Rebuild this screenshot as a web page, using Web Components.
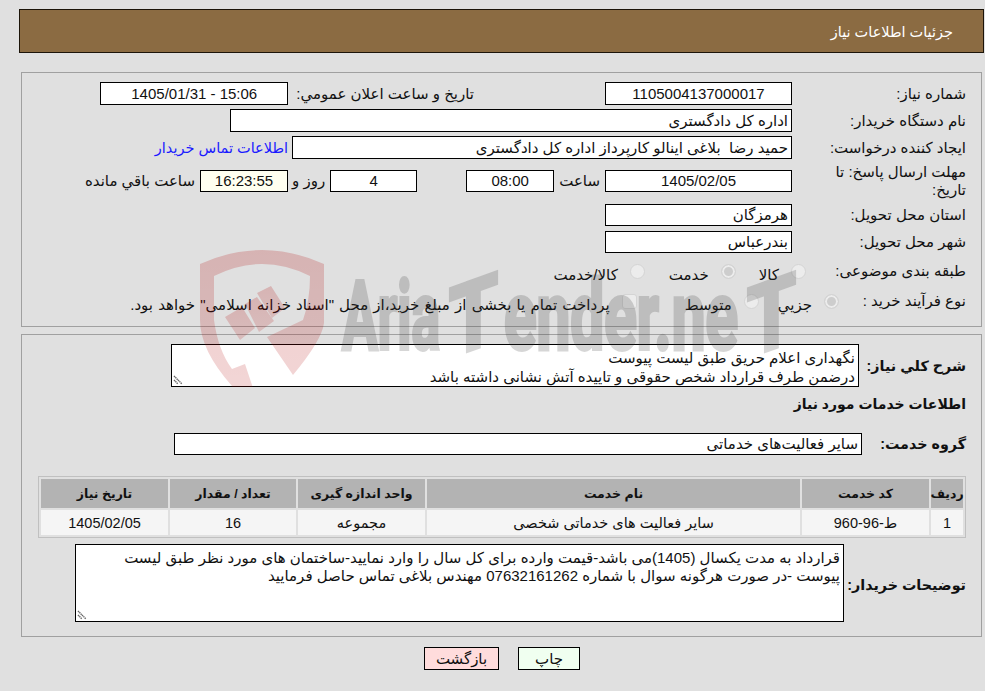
<!DOCTYPE html>
<html lang="fa">
<head>
<meta charset="utf-8">
<title>جزئیات اطلاعات نیاز</title>
<style>
  html, body { margin: 0; background: #e0e0e0; }
  body {
    position: relative;
    height: 691px;
    overflow: hidden;
    color: #111;
    font: 15px/18px "Liberation Sans", "DejaVu Sans", sans-serif;
  }
</style>
</head>
<body>
<page-view></page-view>
<script>
class TitleBar extends HTMLElement {
  constructor() {
    super();
    this.attachShadow({ mode: "open" });
    this.shadowRoot.innerHTML = `
      <style>
        :host {
          display: flex;
          align-items: center;
          box-sizing: border-box;
          height: 44px;
          margin: 9px 1px 0 19px;
          padding: 1px 30px 0;
          direction: rtl;
          color: #fff;
          font-size: 14.5px;
          background: #8b6b42;
          border: 1px solid #1c1409;
        }
      </style>
      <slot></slot>
    `;
  }
}
customElements.define("title-bar", TitleBar);

class InfoPanel extends HTMLElement {
  constructor() {
    super();
    this.attachShadow({ mode: "open" });
    this.shadowRoot.innerHTML = `
      <style>
        :host {
          display: block;
          box-sizing: border-box;
          margin: 0 3px 0 21px;
          padding: 9px 15px 0 16px;
          direction: rtl;
          border: 1px solid #a0a0a0;
        }
      </style>
      <slot></slot>
    `;
  }
}
customElements.define("info-panel", InfoPanel);

class FormRow extends HTMLElement {
  constructor() {
    super();
    this.attachShadow({ mode: "open" });
    this.shadowRoot.innerHTML = `
      <style>
        :host {
          display: flex;
          align-items: stretch;
          height: 22px;
        }
        #label {
          flex: none;
          display: flex;
          align-items: center;
          box-sizing: border-box;
          width: var(--label-w, 174px);
          padding-top: var(--label-top, 0);
          white-space: pre;
        }
        :host([strong]) #label { font-size: 14.3px; font-weight: bold; }
      </style>
      <div id="label"></div>
      <slot></slot>
    `;
    this.shadowRoot.querySelector("#label").textContent = this.getAttribute("label");
  }
}
customElements.define("form-row", FormRow);

class ValueBox extends HTMLElement {
  constructor() {
    super();
    this.attachShadow({ mode: "open" });
    this.shadowRoot.innerHTML = `
      <style>
        :host {
          display: flex;
          flex: none;
          align-items: center;
          box-sizing: border-box;
          padding: 0 3px;
          background: #fff;
          border: 1px solid #000;
        }
        :host([center]) { justify-content: center; }
        slot { white-space: pre; }
      </style>
      <slot></slot>
    `;
  }
}
customElements.define("value-box", ValueBox);

class PlainText extends HTMLElement {
  constructor() {
    super();
    this.attachShadow({ mode: "open" });
    this.shadowRoot.innerHTML = `
      <style>
        :host {
          display: flex;
          flex: none;
          align-items: center;
        }
        slot { white-space: pre; }
      </style>
      <slot></slot>
    `;
  }
}
customElements.define("plain-text", PlainText);

class ChoiceItem extends HTMLElement {
  constructor() {
    super();
    this.attachShadow({ mode: "open" });
    this.shadowRoot.innerHTML = `
      <style>
        :host {
          display: flex;
          flex: none;
          gap: 12px;
          align-items: center;
        }
        #mark {
          flex: none;
          box-sizing: border-box;
          width: 15px;
          height: 15px;
          background: #ececec;
          border: 1px solid #d4d4d4;
          border-radius: 50%;
        }
        :host([square]) #mark { border-radius: 3px; }
        :host([checked]) #mark {
          background: #cdcdcd;
          box-shadow: inset 0 0 0 2px #ececec;
        }
        #text { padding-top: 8px; white-space: pre; }
      </style>
      <div id="mark"></div>
      <div id="text"><slot></slot></div>
    `;
  }
}
customElements.define("choice-item", ChoiceItem);

class NoteBox extends HTMLElement {
  constructor() {
    super();
    this.attachShadow({ mode: "open" });
    this.shadowRoot.innerHTML = `
      <style>
        :host {
          display: block;
          position: relative;
          flex: none;
          box-sizing: border-box;
          padding: 4px 3px 0;
          background: #fff;
          border: 1px solid #000;
        }
        slot { white-space: pre; }
        svg {
          position: absolute;
          left: 1px;
          bottom: 1px;
          width: 10px;
          height: 10px;
        }
      </style>
      <slot></slot>
      <svg viewBox="0 0 10 10">
        <path d="M1 1 9 9M1 5 5 9" stroke="#666" stroke-width="1.4" stroke-dasharray="1.4 .5" fill="none"/>
      </svg>
    `;
  }
}
customElements.define("note-box", NoteBox);

class ServiceTable extends HTMLElement {
  constructor() {
    super();
    this.attachShadow({ mode: "open" });
    const heads = ["ردیف", "کد خدمت", "نام خدمت", "واحد اندازه گیری", "تعداد / مقدار", "تاریخ نیاز"];
    const cells = ["1", "ط-96-960", "سایر فعالیت های خدماتی شخصی", "مجموعه", "16", "1405/02/05"];
    this.shadowRoot.innerHTML = `
      <style>
        :host {
          display: grid;
          grid-template-columns: 32px 127px 373px 127px 126px 127px;
          grid-template-rows: 29px 25px;
          gap: 2px;
          box-sizing: border-box;
          padding: 2px;
          border: 1px solid #c0c0c0;
          font-size: 14.5px;
        }
        div {
          display: flex;
          align-items: center;
          justify-content: center;
          white-space: nowrap;
        }
        .head { font-size: 12.5px; font-weight: bold; background: #b3b3b3; }
        .cell { background: #f5f5f5; }
      </style>
      ${heads.map((text) => `<div class="head">${text}</div>`).join("")}
      ${cells.map((text) => `<div class="cell">${text}</div>`).join("")}
    `;
  }
}
customElements.define("service-table", ServiceTable);

class ActionButton extends HTMLElement {
  constructor() {
    super();
    this.attachShadow({ mode: "open" });
    this.shadowRoot.innerHTML = `
      <style>
        :host {
          display: flex;
          align-items: center;
          justify-content: center;
          box-sizing: border-box;
          height: 23px;
          border: 1px solid #000;
        }
      </style>
      <slot></slot>
    `;
  }
}
customElements.define("action-button", ActionButton);

// lies over the whole page, like the semi transparent logo of the original
class WaterMark extends HTMLElement {
  constructor() {
    super();
    this.attachShadow({ mode: "open" });
    this.shadowRoot.innerHTML = `
      <style>
        :host {
          position: absolute;
          left: 0;
          top: 0;
          width: 985px;
          height: 387px;
          pointer-events: none;
        }
        svg { display: block; }
        #word { opacity: .2; }
        text {
          font-family: Roboto, sans-serif;
          font-weight: 700;
          font-size: 96px;
          fill: rgb(54, 54, 54);
          stroke: rgb(54, 54, 54);
          stroke-width: 4px;
        }
      </style>
      <svg width="985" height="387" viewBox="0 0 985 387">
        <defs>
          <linearGradient id="fade" x1="0" y1="0" x2="0" y2="1">
            <stop offset="0" stop-color="rgb(176,0,0)" stop-opacity=".2"/>
            <stop offset="1" stop-color="rgb(176,0,0)" stop-opacity=".16"/>
          </linearGradient>
        </defs>
        <g fill="url(#fade)">
          <path fill-rule="evenodd" d="M200 264Q262 236 324 264V323Q322 340 293 375L267 337 303 320Q310 300 310 276Q262 252 214 276V320Q218 350 232 369L245 364 257 400H224L232 386Q200 350 200 320Z"/>
          <path d="M225 317 242 307 255 328 240 340Z"/>
          <path d="M245 304 257 297 274 321 259 332Z"/>
          <path d="M257 293 271 286 285 308 272 318Z"/>
        </g>
        <g id="word">
          <text x="342" y="349" textLength="98" lengthAdjust="spacingAndGlyphs">Aria</text>
          <text x="449" y="349" textLength="49" lengthAdjust="spacingAndGlyphs"
            transform="translate(473 0) skewY(-20) translate(-473 0)">T</text>
          <text x="504" y="349" textLength="234" lengthAdjust="spacingAndGlyphs">ender.ne</text>
          <text x="747" y="349" textLength="49" lengthAdjust="spacingAndGlyphs"
            transform="translate(771 0) skewY(-20) translate(-771 0)">T</text>
        </g>
      </svg>
    `;
  }
}
customElements.define("water-mark", WaterMark);

class PageView extends HTMLElement {
  constructor() {
    super();
    this.attachShadow({ mode: "open" });
    this.shadowRoot.innerHTML = `
      <style>
        :host { display: block; }
        #first { height: 255px; margin-top: 19px; }
        #second { height: 303px; margin-top: 7px; }
        .tall { height: 23px; }
        #summary { height: 43px; }
        #summary-box { width: 688px; line-height: 19px; padding-top: 3px; }
        #heading { margin-top: 8px; font-size: 14px; font-weight: bold; }
        #group { height: 22px; margin-top: 20px; --label-w: 104px; }
        #group value-box { width: 688px; }
        #buyer { height: 78px; margin-top: 6px; --label-w: 122px; --label-top: 4px; }
        #buyer-box { width: 769px; }
        #buttons {
          display: flex;
          direction: rtl;
          justify-content: center;
          gap: 19px;
          margin: 10px 0 0 19px;
        }
        #link { color: #1a1aff; font-size: 14.5px; }
        #treasury { word-spacing: 1px; }
        #back { width: 75px; background: #ffdcdc; }
        #print { width: 62px; background: #f0fff0; }
        service-table { margin-top: 21px; width: 928px; }
      </style>

      <title-bar>جزئیات اطلاعات نیاز</title-bar>

      <info-panel id="first">
        <form-row class="tall" label="شماره نیاز:">
          <value-box center style="width:187px">1105004137000017</value-box>
          <plain-text style="margin-right:131px">تاریخ و ساعت اعلان عمومي:</plain-text>
          <value-box center dir="ltr" style="width:188px;margin-right:8px">1405/01/31 - 15:06</value-box>
        </form-row>
        <form-row class="tall" label="نام دستگاه خریدار:" style="margin-top:4px">
          <value-box style="width:562px">اداره کل دادگستری</value-box>
        </form-row>
        <form-row class="tall" label="ایجاد کننده درخواست:" style="margin-top:4px">
          <value-box style="width:500px">حمید رضا  بلاغی اینالو کارپرداز اداره کل دادگستری</value-box>
          <plain-text id="link" style="margin-right:4px">اطلاعات تماس خریدار</plain-text>
        </form-row>
        <form-row label="مهلت ارسال پاسخ: تا
تاریخ:" style="margin-top:11px">
          <value-box center style="width:187px">1405/02/05</value-box>
          <plain-text style="margin-right:5px">ساعت</plain-text>
          <value-box center style="width:88px;margin-right:5px">08:00</value-box>
          <value-box center style="width:87px;margin-right:49px">4</value-box>
          <plain-text style="margin-right:5px">روز و</plain-text>
          <value-box center style="width:88px;margin-right:4px;background:#fffff0">16:23:55</value-box>
          <plain-text style="margin-right:5px">ساعت باقي مانده</plain-text>
        </form-row>
        <form-row label="استان محل تحویل:" style="margin-top:12px">
          <value-box style="width:187px">هرمزگان</value-box>
        </form-row>
        <form-row label="شهر محل تحویل:" style="margin-top:5px">
          <value-box style="width:187px">بندرعباس</value-box>
        </form-row>
        <form-row label="طبقه بندی موضوعی:" style="margin-top:7px;--label-w:160px">
          <choice-item>کالا</choice-item>
          <choice-item checked style="margin-right:23px">خدمت</choice-item>
          <choice-item style="margin-right:24px">کالا/خدمت</choice-item>
        </form-row>
        <form-row label="نوع فرآیند خرید :" style="margin-top:8px;--label-w:127px">
          <choice-item checked>جزیي</choice-item>
          <choice-item style="margin-right:19px">متوسط</choice-item>
          <choice-item id="treasury" square style="margin-right:48px">پرداخت تمام یا بخشی از مبلغ خرید،از محل "اسناد خزانه اسلامی" خواهد بود.</choice-item>
        </form-row>
      </info-panel>

      <info-panel id="second">
        <form-row id="summary" strong label="شرح کلي نياز:" style="--label-w:107px">
          <note-box id="summary-box">نگهداری اعلام حریق طبق لیست پیوست
درضمن طرف قرارداد شخص حقوقی و تاییده آتش نشانی داشته باشد</note-box>
        </form-row>
        <div id="heading">اطلاعات خدمات مورد نیاز</div>
        <form-row id="group" strong label="گروه خدمت:">
          <value-box>سایر فعالیت‌های خدماتی</value-box>
        </form-row>
        <service-table></service-table>
        <form-row id="buyer" strong label="توضیحات خریدار:">
          <note-box id="buyer-box">قرارداد به مدت یکسال (1405)می باشد-قیمت وارده برای کل سال را وارد نمایید-ساختمان های مورد نظر طبق لیست
پیوست -در صورت هرگونه سوال با شماره 07632161262 مهندس بلاغی تماس حاصل فرمایید</note-box>
        </form-row>
      </info-panel>

      <div id="buttons">
        <action-button id="print">چاپ</action-button>
        <action-button id="back">بازگشت</action-button>
      </div>

      <water-mark></water-mark>
    `;
  }
}
customElements.define("page-view", PageView);
</script>
</body>
</html>
